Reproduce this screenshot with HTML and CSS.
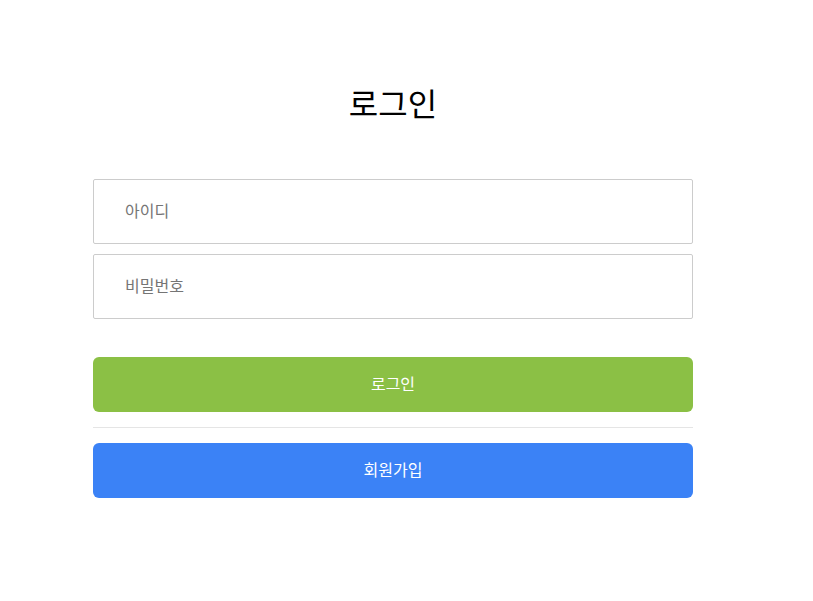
FILE: index.html
```html
<!DOCTYPE html>
<html lang="ko">
<head>
<meta charset="utf-8">
<title>로그인</title>
<link rel="stylesheet" href="styles.css">
</head>
<body>
<main class="login">
  <h1 class="login__title">로그인</h1>
  <form class="login__form">
    <input class="login__input" type="text" placeholder="아이디">
    <input class="login__input" type="password" placeholder="비밀번호">
    <button class="btn btn--login" type="button">로그인</button>
    <hr class="login__divider">
    <button class="btn btn--signup" type="button">회원가입</button>
  </form>
</main>
</body>
</html>
```
FILE: styles.css
```css
html, body {
  margin: 0;
  padding: 0;
  background: #fff;
}
body {
  font-family: "Noto Sans CJK KR", "Noto Sans", sans-serif;
}
.login {
  width: 600px;
  margin-left: 93px;
  padding-top: 78px;
}
.login__title {
  margin: 0;
  font-size: 32px;
  font-weight: 400;
  line-height: 48px;
  text-align: center;
  color: #000;
}
.login__form {
  display: flex;
  flex-direction: column;
  margin-top: 53px;
}
.login__input {
  box-sizing: border-box;
  height: 65px;
  width: 100%;
  margin: 0 0 10px;
  padding: 0 31px 4px;
  border: 1px solid #cccccc;
  border-radius: 2px;
  font-family: inherit;
  font-size: 16px;
  color: #333;
  outline: none;
}
.login__input::placeholder {
  color: #757575;
}
.btn {
  box-sizing: border-box;
  height: 55px;
  width: 100%;
  padding: 0 0 4px;
  border: 0;
  border-radius: 6px;
  color: #fff;
  font-family: inherit;
  font-size: 16px;
  cursor: pointer;
}
.btn--login {
  margin-top: 28px;
  background: #8bc045;
}
.btn--signup {
  background: #3b82f6;
}
.login__divider {
  margin: 15px 0;
  border: 0;
  border-top: 1px solid #e5e5e5;
  height: 0;
}
```
